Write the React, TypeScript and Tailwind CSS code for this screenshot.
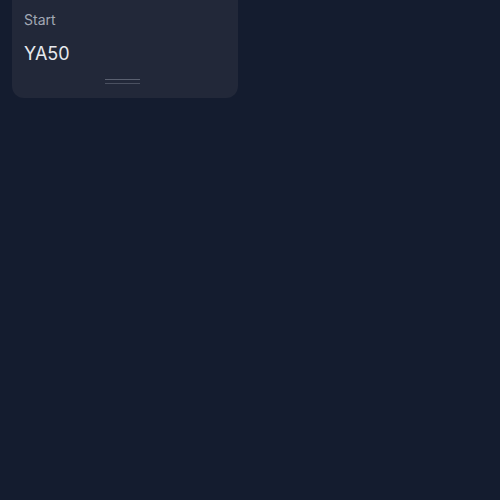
const App = () => {
  return (
    <div className="min-h-[500px] w-[500px] bg-[#141c2f] font-['Inter',sans-serif]">
      <div className="ml-3 w-[226px] rounded-b-xl bg-[#222839] px-3 pt-[12px] pb-[14px]">
        <p className="text-[14px] leading-4 text-[#a3a8b5]">Start</p>
        <p className="mt-[14px] text-[18px] leading-6 text-[#e7e9ee]">YA50</p>
        <div className="mt-[13px] flex flex-col items-center gap-[3px] pr-[6px]">
          <div className="h-px w-[35px] bg-[#5a6070]"></div>
          <div className="h-px w-[35px] bg-[#4a5060]"></div>
        </div>
      </div>
    </div>
  );
};

export default App;
